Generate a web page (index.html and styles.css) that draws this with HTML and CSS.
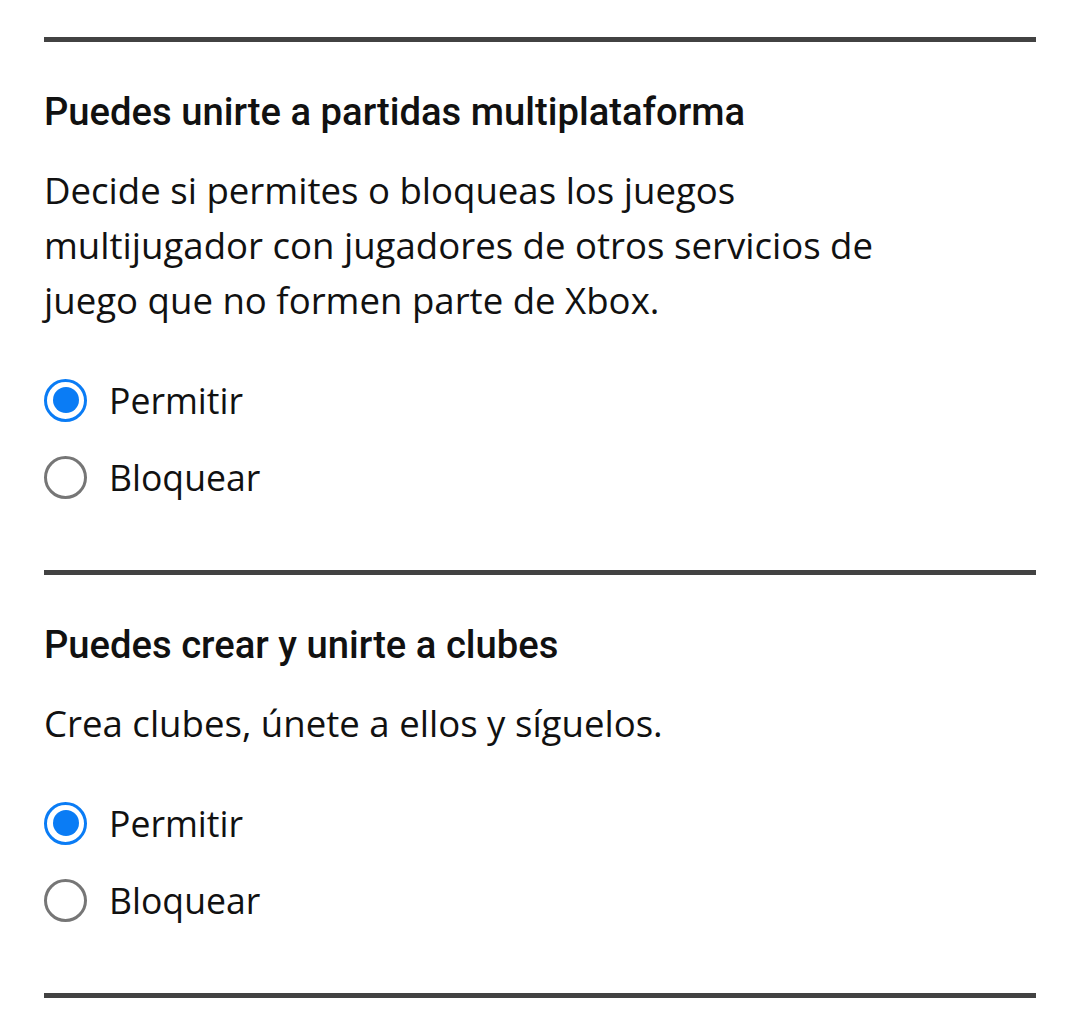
FILE: index.html
```html
<!DOCTYPE html>
<html lang="es">
<head>
<meta charset="utf-8">
<title>Configuración</title>
<link rel="stylesheet" href="styles.css">
</head>
<body>
<main class="page">
  <hr class="divider">
  <section class="setting">
    <h2 class="setting-title">Puedes unirte a partidas multiplataforma</h2>
    <p class="setting-desc">Decide si permites o bloqueas los juegos multijugador con jugadores de otros servicios de juego que no formen parte de Xbox.</p>
    <div class="options">
      <label class="option"><input type="radio" name="cross" class="radio" checked><span class="option-label">Permitir</span></label>
      <label class="option"><input type="radio" name="cross" class="radio"><span class="option-label">Bloquear</span></label>
    </div>
  </section>
  <hr class="divider">
  <section class="setting">
    <h2 class="setting-title">Puedes crear y unirte a clubes</h2>
    <p class="setting-desc">Crea clubes, únete a ellos y síguelos.</p>
    <div class="options">
      <label class="option"><input type="radio" name="clubs" class="radio" checked><span class="option-label">Permitir</span></label>
      <label class="option"><input type="radio" name="clubs" class="radio"><span class="option-label">Bloquear</span></label>
    </div>
  </section>
  <hr class="divider">
</main>
</body>
</html>
```

FILE: styles.css
```css
html, body {
  margin: 0;
  padding: 0;
  background: #ffffff;
}

.page {
  padding: 37px 44px 0;
  color: #111111;
}

.divider {
  margin: 0;
  border: 0;
  height: 5px;
  background: #424242;
}

.setting {
  padding: 49px 0 71px;
}

.setting-title {
  margin: 0;
  font-family: Roboto, "Liberation Sans", sans-serif;
  font-weight: 500;
  font-size: 38.2px;
  line-height: 42px;
  color: #111111;
}

.setting-desc {
  margin: 30px 0 0;
  max-width: 880px;
  font-family: "Open Sans", "Noto Sans", sans-serif;
  font-size: 36.6px;
  line-height: 55px;
  color: #111111;
}

.options {
  margin-top: 50px;
  display: flex;
  flex-direction: column;
  gap: 33px;
}

.option {
  display: flex;
  align-items: center;
  gap: 22px;
  height: 44px;
}

.radio {
  appearance: none;
  -webkit-appearance: none;
  margin: 0;
  width: 43px;
  height: 43px;
  box-sizing: border-box;
  border: 3px solid #767676;
  border-radius: 50%;
  background: #ffffff;
  display: grid;
  place-items: center;
  flex: none;
}

.radio:checked {
  border-color: #0a7cf5;
}

.radio:checked::after {
  content: "";
  width: 26px;
  height: 26px;
  border-radius: 50%;
  background: #0a7cf5;
}

.option-label {
  font-family: "Open Sans", "Noto Sans", sans-serif;
  font-size: 35.6px;
  line-height: 44px;
  color: #111111;
}
```
